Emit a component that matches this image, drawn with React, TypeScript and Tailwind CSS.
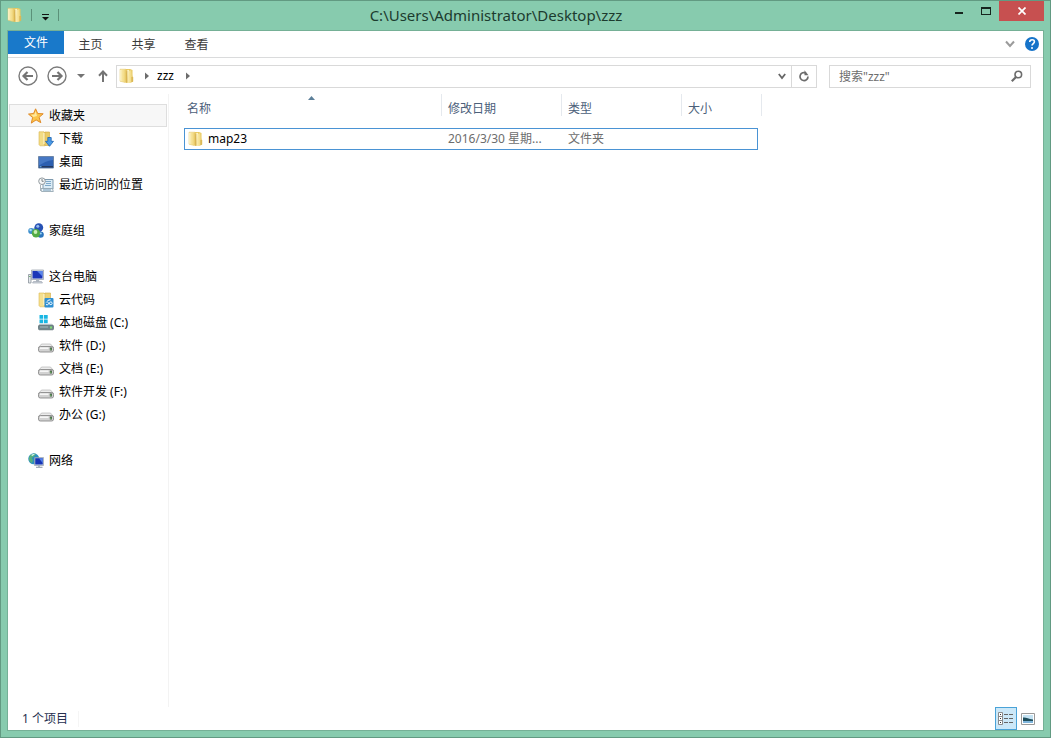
import React from "react";

type IconProps = { className?: string };

function FolderIcon({ className = "size-4" }: IconProps) {
  return (
    <svg viewBox="0 0 16 16" className={className} aria-hidden="true">
      <defs>
        <linearGradient id="folderFront" x1="0" x2="1">
          <stop offset="0" stopColor="#fbeeb4" />
          <stop offset="0.6" stopColor="#f3dc88" />
          <stop offset="1" stopColor="#e0bc52" />
        </linearGradient>
      </defs>
      <path d="M6.500 1H11l2.500 1v12L7 15z" fill="#e9c95f" />
      <path d="M1 1.200h5.500l1.300 1V14L6 14.500 1 13.200z" fill="url(#folderFront)" stroke="#e3c566" strokeWidth="0.5" />
      <path d="M7.800 2.500 10 1.800v11.500l-1.500 1.200z" fill="#fcf3c6" />
      <path d="M9.500 3 12.500 2l.8 6.500.9.500v4.500l-3 1.500H8.500z" fill="url(#folderFront)" />
      <path d="M7.900 3v11.500" stroke="#cfa746" strokeWidth="0.8" />
      <path d="M13 9v5" stroke="#c9a23f" strokeWidth="0.7" />
      <path d="M1.800 2v10.800" stroke="#fff9dc" strokeWidth="0.8" />
    </svg>
  );
}

function StarIcon() {
  return (
    <svg viewBox="0 0 16 16" className="size-4" aria-hidden="true">
      <path
        d="M7.600.8 9.700 5.500l5.500.3-4.100 3.500 1.700 5.400-4.700-2.800-4.800 3.200 1.300-5.600L.5 6.100l5.100-.6z"
        fill="#fbc54a"
        stroke="#e08a28"
        strokeWidth="1"
        strokeLinejoin="round"
      />
      <path d="M7.600 3 6.400 6.400l-3.400.4 2.500 2.100 3.500-.8z" fill="#ffe9a0" />
    </svg>
  );
}

function DownloadsIcon() {
  return (
    <svg viewBox="0 0 16 16" className="size-4" aria-hidden="true">
      <path d="M1 .8h5l.8 1v13H2L1 13.600z" fill="#f3dc85" stroke="#d9b650" strokeWidth="0.6" />
      <path d="M6.800 1h4.700v13.500H6.800z" fill="#e9cb66" stroke="#d0a640" strokeWidth="0.6" />
      <path d="M6 2v11" stroke="#fff8d8" />
      <path
        d="M9.800 6.500h3.400v3.800h2.300l-4 5-4-5h2.300z"
        fill="#4a9ae6"
        stroke="#1c62b0"
        strokeWidth="0.8"
        strokeLinejoin="round"
      />
    </svg>
  );
}

function DesktopIcon() {
  return (
    <svg viewBox="0 0 16 16" className="size-4" aria-hidden="true">
      <path d="M.5 2.500h15v11.500H.5z" fill="#2c5fb0" stroke="#6d86a8" />
      <path d="M1 3h14v3C9 6.500 5 9 1 11.500z" fill="#4678c4" />
      <path d="M1 12h14v1.500H1z" fill="#24395f" />
      <path d="M1.500 12.200h2v1h-2z" fill="#6fb7ef" />
    </svg>
  );
}

function RecentIcon() {
  return (
    <svg viewBox="0 0 16 16" className="size-4" aria-hidden="true">
      <path d="M5 2.500h10v9.500H5z" fill="#dcecf6" stroke="#7e99ad" />
      <path d="M7 4.500h6M8 6.500h5M7 8.500h6" stroke="#7fa9c9" />
      <path d="M3 11.500h11.500l.8 3H3.500z" fill="#edf3f7" stroke="#8b9fac" strokeWidth="0.8" />
      <path d="M5 13h8" stroke="#6d97b6" />
      <circle cx="4" cy="4.200" r="3.300" fill="#f7f8f8" stroke="#929a9f" />
      <path d="M4 2v2.300h1.700" fill="none" stroke="#5e6970" strokeWidth="0.8" />
      <path d="M2.500 8v6" stroke="#aab4ba" />
    </svg>
  );
}

function HomegroupIcon() {
  return (
    <svg viewBox="0 0 16 16" className="size-4" aria-hidden="true">
      <path d="M4 8 10 3l2.500 8z" fill="none" stroke="#8eb8c9" strokeWidth="2" />
      <circle cx="3.200" cy="8" r="3" fill="#3e8fcd" />
      <circle cx="10.800" cy="4.600" r="4.400" fill="#2752b4" />
      <circle cx="12.600" cy="11.600" r="3.200" fill="#2b75bd" />
      <circle cx="8" cy="10.200" r="4.200" fill="#52ab44" />
      <circle cx="2.600" cy="7" r="1.200" fill="#a3daf5" />
      <circle cx="9.800" cy="3.200" r="1.500" fill="#95baf0" />
      <circle cx="7.500" cy="9" r="1.900" fill="#c9efb8" />
      <circle cx="12.800" cy="10.600" r="1" fill="#9fd2f3" />
    </svg>
  );
}

function ComputerIcon() {
  return (
    <svg viewBox="0 0 16 16" className="size-4" aria-hidden="true">
      <path d="M.5 5.500h2.500v8.500H.5z" fill="#e4e8ec" stroke="#89929b" strokeWidth="0.8" />
      <path d="M1.200 7.500h1.300" stroke="#58a05a" />
      <path d="M3.500 1h12v9.500h-12z" fill="#d7dde5" stroke="#929ba7" strokeWidth="0.7" />
      <path d="M4.500 2h10v7.500h-10z" fill="#1a35b8" />
      <path d="M9 2h5.500v5.500z" fill="#5984ea" />
      <path d="M8 10.800h3.200v1.700H8z" fill="#abb4be" />
      <path d="M5.500 12.500h8l1 1.500h-10z" fill="#d3d9df" stroke="#929ba7" strokeWidth="0.6" />
    </svg>
  );
}

function CloudFolderIcon() {
  return (
    <svg viewBox="0 0 16 16" className="size-4" aria-hidden="true">
      <path d="M1 1h5l.8 1v12.800H2L1 13.500z" fill="#f5e08e" stroke="#dcb955" strokeWidth="0.6" />
      <path d="M6.800 1h5.700v13.500H6.800z" fill="#ecd176" stroke="#d4ab45" strokeWidth="0.6" />
      <path d="M6 2v11" stroke="#fffade" />
      <rect x="6.500" y="6" width="9" height="9.500" rx="1" fill="#2e8fd2" />
      <path
        d="M8 12.500c1.500 1 2.500-.2 3.300-1.600.9-1.600 3.200-1 2.800.7-.3 1.400-2 1.400-2.900.1C10 9.800 8.600 9.300 8.300 10.400M9.500 8.500l3-.8"
        fill="none"
        stroke="#fff"
        strokeWidth="1"
      />
    </svg>
  );
}

function SystemDriveIcon() {
  return (
    <svg viewBox="0 0 16 16" className="size-4" aria-hidden="true">
      <path d="M1.500 0h3.700v3.700H1.500zM6 0h3.700v3.700H6zM1.500 4.500h3.700v3.700H1.500zM6 4.500h3.700v3.700H6z" fill="#19b6e3" />
      <path d="M1.500 8.800H14l1.500 2H.5z" fill="#c6d0d5" />
      <rect x=".5" y="10.300" width="15" height="4.500" rx="1" fill="#71868c" stroke="#53656c" strokeWidth="0.7" />
      <path d="M2 12h8" stroke="#a7babf" />
      <path d="M12 11.500h2v2h-2z" fill="#7fdc72" />
    </svg>
  );
}

function DriveIcon() {
  return (
    <svg viewBox="0 0 16 16" className="size-4" aria-hidden="true">
      <path d="M3.500 6h9l3 3.500H.5z" fill="#ececec" stroke="#ababab" strokeWidth="0.6" />
      <rect x=".5" y="8.500" width="15" height="5.500" rx="1.800" fill="#d2d2d2" stroke="#7f7f7f" strokeWidth="0.8" />
      <path d="M2 10.200h8.500" stroke="#fafafa" strokeWidth="1.400" />
      <path d="M11.800 9.500h2.200v3h-2.200z" fill="#4d654d" />
      <path d="M12.300 10.700h1v1h-1z" fill="#76dc69" />
    </svg>
  );
}

function NetworkIcon() {
  return (
    <svg viewBox="0 0 16 16" className="size-4" aria-hidden="true">
      <circle cx="5.800" cy="5.800" r="5.500" fill="#2c8fc0" />
      <path d="M2 2.500c2-2 4.500-2 6-1.500L6 3.500 3.500 5l1.500 2-1 3C1 9 0 5.500 2 2.500z" fill="#57b07c" />
      <path d="M3 2c1.500-1 3-1.200 4-1L4.500 3z" fill="#d7f5ed" />
      <path d="M6.500 4.500h9v8h-9z" fill="#d4dbe5" stroke="#8792a1" strokeWidth="0.6" />
      <path d="M7.200 5.200h7.600v6.300H7.200z" fill="#1734b5" />
      <path d="M11 5.200h3.800v5z" fill="#5683e8" />
      <path d="M10 12.500h2v1.200h-2z" fill="#9da8b5" />
      <path d="M8 13.700h6.500V15H8z" fill="#a4adb8" />
    </svg>
  );
}

type NavNode = { label: string; icon: () => React.ReactElement; children?: NavNode[] };

const navGroups: NavNode[] = [
  {
    label: "收藏夹",
    icon: StarIcon,
    children: [
      { label: "下载", icon: DownloadsIcon },
      { label: "桌面", icon: DesktopIcon },
      { label: "最近访问的位置", icon: RecentIcon },
    ],
  },
  { label: "家庭组", icon: HomegroupIcon },
  {
    label: "这台电脑",
    icon: ComputerIcon,
    children: [
      { label: "云代码", icon: CloudFolderIcon },
      { label: "本地磁盘 (C:)", icon: SystemDriveIcon },
      { label: "软件 (D:)", icon: DriveIcon },
      { label: "文档 (E:)", icon: DriveIcon },
      { label: "软件开发 (F:)", icon: DriveIcon },
      { label: "办公 (G:)", icon: DriveIcon },
    ],
  },
  { label: "网络", icon: NetworkIcon },
];

function TitleBar() {
  return (
    <header className="flex h-[30px] shrink-0 items-start">
      <div className="flex h-7 items-center pl-1.5">
        <FolderIcon />
        <span className="ml-2 h-3 w-px bg-[#5b9179]" />
        <button type="button" aria-label="自定义快速访问工具栏" className="flex w-[26px] justify-center">
          <svg viewBox="0 0 7 7" className="mt-1 size-[7px]" aria-hidden="true">
            <path d="M0 .5h7" stroke="#111" />
            <path d="M0 3h7L3.500 6.500z" fill="#111" />
          </svg>
        </button>
        <span className="h-3 w-px bg-[#5b9179]" />
      </div>
      <h1 className="min-w-0 flex-1 truncate pt-0.5 pr-3 text-center text-[15px] leading-6 text-[#1c3b2e]">
        C:\Users\Administrator\Desktop\zzz
      </h1>
      <div className="flex pr-1.5">
        <button type="button" aria-label="最小化" className="flex h-5 w-[27px] items-center justify-center">
          <span className="mt-1 h-0.5 w-2 bg-[#16251e]" />
        </button>
        <button type="button" aria-label="最大化" className="flex h-5 w-[27px] items-center justify-center">
          <span className="h-2 w-2.5 border border-t-2 border-[#16251e]" />
        </button>
        <button type="button" aria-label="关闭" className="flex h-5 w-[45px] items-center justify-center bg-[#c75050]">
          <svg viewBox="0 0 8 8" className="size-2" aria-hidden="true">
            <path d="M.5.500l7 7M7.500.5l-7 7" stroke="#fff" strokeWidth="1.700" />
          </svg>
        </button>
      </div>
    </header>
  );
}

function RibbonTabs() {
  return (
    <nav aria-label="功能区" className="flex h-[27px] shrink-0 items-start border-b border-[#dadbdc] text-[#3b3b3b]">
      <button type="button" className="h-[23px] w-14 bg-[#1979ca] text-white">
        文件
      </button>
      {["主页", "共享", "查看"].map((tab) => (
        <button key={tab} type="button" className="h-[27px] w-[53px]">
          {tab}
        </button>
      ))}
      <div className="ml-auto flex h-[26px] items-center gap-2.5 pr-1">
        <button type="button" aria-label="展开功能区">
          <svg viewBox="0 0 10 8" className="h-2 w-2.5" aria-hidden="true">
            <path d="M1 1.500 5 6l4-4.500" fill="none" stroke="#9b9b9b" strokeWidth="2" />
          </svg>
        </button>
        <button type="button" aria-label="帮助">
          <svg viewBox="0 0 14 14" className="size-3.5" aria-hidden="true">
            <circle cx="7" cy="7" r="7" fill="#1673c9" />
            <path d="M4.700 5c.1-3.100 4.800-3 4.700-.2C9.400 6.500 7 6.600 7 8.600" fill="none" stroke="#fff" strokeWidth="1.600" />
            <circle cx="7" cy="10.900" r="1" fill="#fff" />
          </svg>
        </button>
      </div>
    </nav>
  );
}

function RoundArrow({ back = false }: { back?: boolean }) {
  return (
    <svg viewBox="0 0 20 20" className="size-5" aria-hidden="true">
      <circle cx="10" cy="10" r="9" fill="none" stroke="#7b7b7b" strokeWidth="1.400" />
      <path
        d={back ? "M15 10H6M9.500 6l-4 4 4 4" : "M5 10h9M10.500 6l4 4-4 4"}
        fill="none"
        stroke="#747474"
        strokeWidth="2.200"
      />
    </svg>
  );
}

function Crumb() {
  return (
    <svg viewBox="0 0 4 8" className="h-2 w-1" aria-hidden="true">
      <path d="M0 .5 4 4 0 7.500z" fill="#6c6c6c" />
    </svg>
  );
}

function AddressRow() {
  return (
    <div className="flex h-9 shrink-0 items-center pr-3 pl-2.5">
      <button type="button" aria-label="后退">
        <RoundArrow back />
      </button>
      <button type="button" aria-label="前进" className="ml-[9px]">
        <RoundArrow />
      </button>
      <button type="button" aria-label="最近浏览的位置" className="ml-2.5">
        <svg viewBox="0 0 8 4" className="h-1 w-2" aria-hidden="true">
          <path d="M0 0h8L4 4z" fill="#747474" />
        </svg>
      </button>
      <button type="button" aria-label="上移" className="ml-3">
        <svg viewBox="0 0 12 14" className="h-3.5 w-3" aria-hidden="true">
          <path d="M6 13V3M2 6.800 6 2.500l4 4.300" fill="none" stroke="#747474" strokeWidth="2" />
        </svg>
      </button>
      <div className="ml-[7px] flex h-[23px] min-w-0 flex-1 items-center border border-[#d9d9d9] pl-0.5">
        <FolderIcon />
        <span className="ml-2.5">
          <Crumb />
        </span>
        <button type="button" className="ml-2 text-black">
          zzz
        </button>
        <span className="ml-3">
          <Crumb />
        </span>
        <button type="button" aria-label="以前的位置" className="ml-auto flex h-full w-[18px] items-center justify-center">
          <svg viewBox="0 0 8 7" className="h-[7px] w-2" aria-hidden="true">
            <path d="M.8 1 4 5l3.200-4" fill="none" stroke="#666" strokeWidth="1.800" />
          </svg>
        </button>
        <button
          type="button"
          aria-label="刷新"
          className="flex h-full w-[25px] items-center justify-center border-l border-[#d9d9d9]"
        >
          <svg viewBox="0 0 12 12" className="size-3" aria-hidden="true">
            <path d="M8 3.100A4 4 0 1 0 10 6.500" fill="none" stroke="#6c6c6c" strokeWidth="1.700" />
            <path d="M6.500.300v5h4z" fill="#6c6c6c" />
          </svg>
        </button>
      </div>
      <label className="ml-3 flex h-[23px] w-[202px] items-center border border-[#d9d9d9] pr-[7px] pl-[9px]">
        <span className="sr-only">搜索</span>
        <input
          type="text"
          placeholder={'搜索"zzz"'}
          className="h-full min-w-0 flex-1 bg-transparent outline-none placeholder:text-[#6d6d6d]"
        />
        <svg viewBox="0 0 12 12" className="size-3" aria-hidden="true">
          <circle cx="7.300" cy="4.500" r="3.300" fill="none" stroke="#6c6c6c" strokeWidth="1.600" />
          <path d="M5 7 .8 11.200" stroke="#6c6c6c" strokeWidth="2.200" />
        </svg>
      </label>
    </div>
  );
}

function Sidebar() {
  return (
    <nav
      aria-label="导航窗格"
      className="flex w-[161px] shrink-0 flex-col gap-[23px] border-r border-[#f3f3f3] pt-2.5 pr-px pl-px text-black"
    >
      {navGroups.map((group, index) => (
        <ul key={group.label}>
          <li>
            <a
              href="#"
              className={
                index === 0
                  ? "flex h-[23px] items-center gap-[5px] bg-[#f7f7f7] pl-[19px] outline outline-1 -outline-offset-1 outline-[#dedede]"
                  : "flex h-[23px] items-center gap-[5px] pl-[19px]"
              }
            >
              <group.icon />
              {group.label}
            </a>
          </li>
          {group.children?.map((child) => (
            <li key={child.label}>
              <a href="#" className="flex h-[23px] items-center gap-[5px] pl-[29px]">
                <child.icon />
                {child.label}
              </a>
            </li>
          ))}
        </ul>
      ))}
    </nav>
  );
}

function FileList() {
  return (
    <main className="min-w-0 flex-1 overflow-hidden pl-[15px]">
      <table className="w-[574px] table-fixed border-separate border-spacing-0 text-left">
        <colgroup>
          <col className="w-[258px]" />
          <col className="w-[120px]" />
          <col className="w-[120px]" />
          <col />
        </colgroup>
        <thead>
          <tr className="text-[#4c607a]">
            <th scope="col" aria-sort="ascending" className="relative pb-3 font-normal">
              <div className="h-[22px] border-r border-[#e5e9ee] pt-[7px] pl-[3px]">名称</div>
              <svg viewBox="0 0 7 4" className="absolute top-0.5 right-[127px] h-1 w-[7px]" aria-hidden="true">
                <path d="M0 4 3.500 0 7 4z" fill="#5c7f99" />
              </svg>
            </th>
            <th scope="col" className="pb-3 font-normal">
              <div className="h-[22px] border-r border-[#e5e9ee] pt-[7px] pl-1.5">修改日期</div>
            </th>
            <th scope="col" className="pb-3 font-normal">
              <div className="h-[22px] border-r border-[#e5e9ee] pt-[7px] pl-1.5">类型</div>
            </th>
            <th scope="col" className="pb-3 font-normal">
              <div className="-mr-1 h-[22px] border-r border-[#e5e9ee] pt-[7px] pl-1.5">大小</div>
            </th>
          </tr>
        </thead>
        <tbody>
          <tr className="text-[#6d6d6d]">
            <td className="h-[22px] border-y border-l border-[#4a93d4] p-0">
              <div className="flex items-center gap-1 pl-[3px] text-black">
                <FolderIcon />
                map23
              </div>
            </td>
            <td className="border-y border-[#4a93d4] py-0 pl-1.5 whitespace-nowrap">2016/3/30 星期...</td>
            <td className="border-y border-[#4a93d4] py-0 pl-1.5">文件夹</td>
            <td className="border-y border-r border-[#4a93d4] p-0" />
          </tr>
        </tbody>
      </table>
    </main>
  );
}

function StatusBar() {
  return (
    <footer className="flex h-[23px] shrink-0 items-center justify-between pl-3.5 text-[#26304f]">
      <span className="flex items-center gap-2.5">
        1 个项目
        <span className="h-4 w-px bg-[#f5f5f5]" />
      </span>
      <div className="flex items-center pr-2">
        <button
          type="button"
          aria-label="详细信息"
          aria-pressed="true"
          className="flex h-[23px] w-[22px] items-center justify-center border border-[#4aa3d8] bg-[#cce8f8]"
        >
          <svg viewBox="0 0 16 13" className="h-[13px] w-4" aria-hidden="true">
            <path d="M.5.500h4v12h-4zM.5 4.500h4M.5 8.500h4" fill="#fff" stroke="#8b8b8b" />
            <path d="M2 2.500h1M2 6.500h1M2 10.500h1" stroke="#333" />
            <path d="M6 2.500h4M11 2.500h4M6 6.500h4M11 6.500h4M6 10.500h4M11 10.500h4" stroke="#666" />
          </svg>
        </button>
        <button type="button" aria-label="大图标" className="ml-1 flex h-[23px] items-center">
          <svg viewBox="0 0 14 12" className="h-3 w-3.5" aria-hidden="true">
            <path d="M.5.500h13v11H.5z" fill="#fff" stroke="#999" />
            <path d="M2 2h10v8H2z" fill="#c3e2f3" />
            <path d="M2 4.500c3-.5 5 1.500 10 2v1.500H2z" fill="#1e4d5b" />
            <path d="M2 8h10v2H2z" fill="#7fb5dc" />
          </svg>
        </button>
      </div>
    </footer>
  );
}

export default function App() {
  return (
    <div className="flex h-screen flex-col border border-[#629a82] bg-[#87cbae] px-[7px] pb-[7px] font-['Noto_Sans','Noto_Sans_CJK_SC',sans-serif] text-xs">
      <div className="-mx-[7px]">
        <TitleBar />
      </div>
      <div className="flex min-h-0 flex-1 flex-col bg-white outline outline-1 outline-[#75b096]">
        <RibbonTabs />
        <AddressRow />
        <div className="flex min-h-0 flex-1">
          <Sidebar />
          <FileList />
        </div>
        <StatusBar />
      </div>
    </div>
  );
}
